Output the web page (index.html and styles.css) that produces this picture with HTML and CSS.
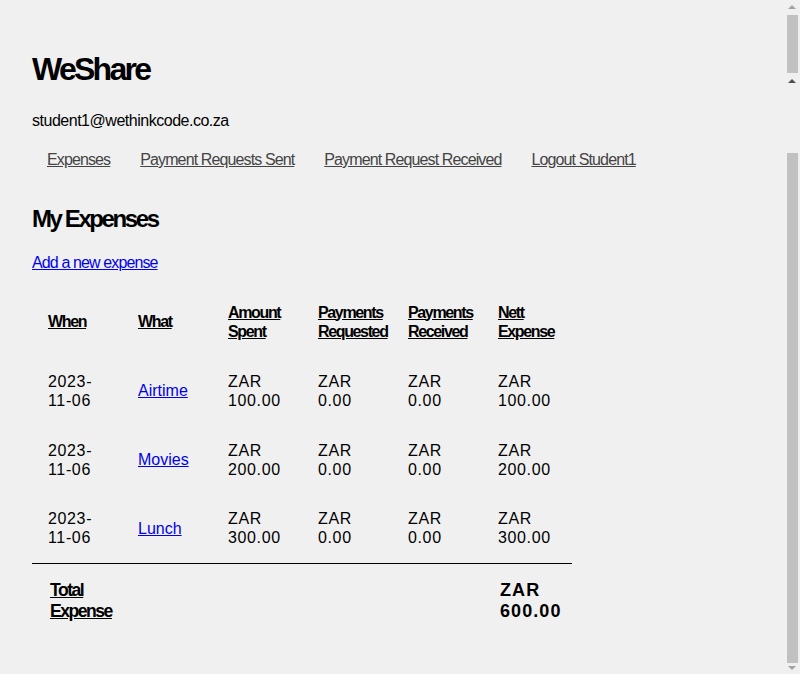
FILE: index.html
```html
<!DOCTYPE html>
<html lang="en">
<head>
<meta charset="utf-8">
<title>WeShare</title>
<link rel="stylesheet" href="styles.css">
</head>
<body>
<div class="page">
  <h1 class="title">WeShare</h1>
  <div class="user">student1@wethinkcode.co.za</div>
  <ul class="nav">
    <li><a href="#">Expenses</a></li>
    <li><a href="#">Payment Requests Sent</a></li>
    <li><a href="#">Payment Request Received</a></li>
    <li><a href="#">Logout Student1</a></li>
  </ul>
  <h2 class="section">My Expenses</h2>
  <a class="add" href="#">Add a new expense</a>
  <table class="expenses">
    <thead>
      <tr>
        <th>When</th>
        <th>What</th>
        <th>Amount Spent</th>
        <th>Payments Requested</th>
        <th>Payments Received</th>
        <th>Nett Expense</th>
      </tr>
    </thead>
    <tbody>
      <tr>
        <td>2023-<span class="nowrap">11-06</span></td>
        <td><a href="#">Airtime</a></td>
        <td>ZAR 100.00</td>
        <td>ZAR 0.00</td>
        <td>ZAR 0.00</td>
        <td>ZAR 100.00</td>
      </tr>
      <tr>
        <td>2023-<span class="nowrap">11-06</span></td>
        <td><a href="#">Movies</a></td>
        <td>ZAR 200.00</td>
        <td>ZAR 0.00</td>
        <td>ZAR 0.00</td>
        <td>ZAR 200.00</td>
      </tr>
      <tr>
        <td>2023-<span class="nowrap">11-06</span></td>
        <td><a href="#">Lunch</a></td>
        <td>ZAR 300.00</td>
        <td>ZAR 0.00</td>
        <td>ZAR 0.00</td>
        <td>ZAR 300.00</td>
      </tr>
    </tbody>
    <tfoot>
      <tr>
        <th class="total-label">Total Expense</th>
        <td></td>
        <td></td>
        <td></td>
        <td></td>
        <th class="total-value">ZAR 600.00</th>
      </tr>
    </tfoot>
  </table>
</div>
<div class="scrollbar" aria-hidden="true">
  <span class="sb-arrow sb-up"></span>
  <span class="sb-thumb sb-thumb-top"></span>
  <span class="sb-arrow sb-up-dark"></span>
  <span class="sb-thumb sb-thumb-main"></span>
  <span class="sb-arrow sb-down"></span>
</div>
</body>
</html>
```
FILE: styles.css
```css
html {
  background: #f0f0f0;
}
body {
  margin: 0;
  background: #f0f0f0;
  color: #000;
  font-family: "Liberation Sans", Arial, sans-serif;
  font-size: 16px;
  line-height: 19px;
  letter-spacing: -0.055em;
}
.page {
  padding: 51px 32px 20px;
}
.title {
  margin: 0;
  font-size: 32px;
  line-height: 36px;
  font-weight: bold;
  letter-spacing: -0.085em;
}
.user {
  margin-top: 24px;
  letter-spacing: -0.03em;
}
.nav {
  list-style: none;
  margin: 20px 0 0;
  padding: 0;
  display: flex;
}
.nav li {
  padding: 0 15px;
}
.nav a {
  color: #444;
}
.section {
  margin: 36px 0 0;
  font-size: 24px;
  line-height: 28px;
  font-weight: bold;
  letter-spacing: -0.1em;
}
.add {
  display: inline-block;
  margin-top: 20px;
  color: #00e;
}
.expenses {
  margin-top: 15px;
  width: 540px;
  table-layout: fixed;
  border-collapse: collapse;
}
.expenses th,
.expenses td {
  box-sizing: border-box;
  width: 90px;
  padding: 15px 16px;
  height: 69px;
  text-align: left;
  vertical-align: middle;
}
.expenses td {
  letter-spacing: 0.04em;
}
.expenses th {
  letter-spacing: -0.085em;
}
.expenses thead th {
  text-decoration: underline;
}
.expenses td a {
  color: #00e;
  letter-spacing: 0;
}
.nowrap {
  white-space: nowrap;
}
.expenses tfoot tr {
  border-top: 1px solid #000;
}
.expenses tfoot th,
.expenses tfoot td {
  height: auto;
  padding: 16px 18px;
  font-size: 17.6px;
  line-height: 21px;
}
.expenses tfoot .total-value {
  padding-right: 0;
  font-size: 18px;
  letter-spacing: 0.06em;
}
.total-label {
  text-decoration: underline;
}

/* window scrollbar drawn over the page edge */
.scrollbar {
  position: fixed;
  top: 0;
  right: 0;
  width: 15px;
  height: 100vh;
  background: #f0f0f0;
}
.sb-thumb {
  position: absolute;
  left: 2px;
  width: 11px;
  background: #c1c1c1;
}
.sb-thumb-top {
  top: 15px;
  height: 58px;
}
.sb-thumb-main {
  top: 153px;
  height: 510px;
}
.sb-arrow {
  position: absolute;
  left: 3px;
  width: 0;
  height: 0;
  border-left: 4.5px solid transparent;
  border-right: 4.5px solid transparent;
}
.sb-up {
  top: 5px;
  border-bottom: 4px solid #a3a3a3;
}
.sb-up-dark {
  top: 79px;
  border-bottom: 4px solid #505050;
}
.sb-down {
  bottom: 4px;
  border-top: 4px solid #a3a3a3;
}
```
